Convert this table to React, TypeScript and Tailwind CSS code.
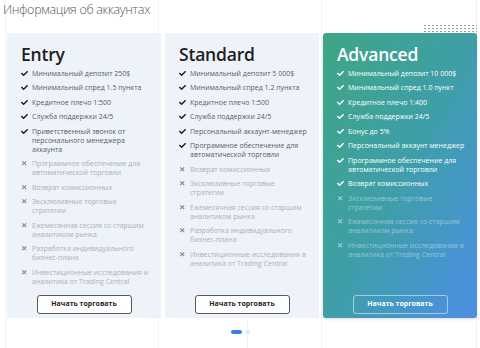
import React from "react";
import { FaCheck, FaTimes } from "react-icons/fa";

type Item = { t: string[]; ok: boolean };

const entry: Item[] = [
  { t: ["Минимальный депозит 250$"], ok: true },
  { t: ["Минимальный спред 1.5 пункта"], ok: true },
  { t: ["Кредитное плечо 1:500"], ok: true },
  { t: ["Служба поддержки 24/5"], ok: true },
  { t: ["Приветственный звонок от", "персонального менеджера", "аккаунта"], ok: true },
  { t: ["Программное обеспечение для", "автоматической торговли"], ok: false },
  { t: ["Возврат комиссионных"], ok: false },
  { t: ["Эксклюзивные торговые", "стратегии"], ok: false },
  { t: ["Ежемесячная сессия со старшим", "аналитиком рынка"], ok: false },
  { t: ["Разработка индивидуального", "бизнес-плана"], ok: false },
  { t: ["Инвестиционные исследования и", "аналитика от Trading Central"], ok: false },
];

const standard: Item[] = [
  { t: ["Минимальный депозит 5 000$"], ok: true },
  { t: ["Минимальный спред 1.2 пункта"], ok: true },
  { t: ["Кредитное плечо 1:500"], ok: true },
  { t: ["Служба поддержки 24/5"], ok: true },
  { t: ["Персональный аккаунт-менеджер"], ok: true },
  { t: ["Программное обеспечение для", "автоматической торговли"], ok: true },
  { t: ["Возврат комиссионных"], ok: false },
  { t: ["Эксклюзивные торговые", "стратегии"], ok: false },
  { t: ["Ежемесячная сессия со старшим", "аналитиком рынка"], ok: false },
  { t: ["Разработка индивидуального", "бизнес-плана"], ok: false },
  { t: ["Инвестиционные исследования в", "аналитика от Trading Central"], ok: false },
];

const advanced: Item[] = [
  { t: ["Минимальный депозит 10 000$"], ok: true },
  { t: ["Минимальный спред 1.0 пункт"], ok: true },
  { t: ["Кредитное плечо 1:400"], ok: true },
  { t: ["Служба поддержки 24/5"], ok: true },
  { t: ["Бонус до 5%"], ok: true },
  { t: ["Персональный аккаунт менеджер"], ok: true },
  { t: ["Программное обеспечение для", "автоматической торговли"], ok: true },
  { t: ["Возврат комиссионных"], ok: true },
  { t: ["Эксклюзивные торговые", "стратегии"], ok: false },
  { t: ["Ежемесячная сессия со старшим", "аналитиком рынка"], ok: false },
  { t: ["Инвестиционные исследования в", "аналитика от Trading Central"], ok: false },
];

function Card({ title, items, dark }: { title: string; items: Item[]; dark?: boolean }) {
  return (
    <div
      className={
        "w-[154px] h-[285px] flex flex-col pt-[11px] pb-[4px] px-[14px] " +
        (dark
          ? "bg-gradient-to-br from-[#3ea683] via-[#3f9ea8] to-[#4d8ee6] rounded-[3px] shadow-[0_1px_3px_rgba(0,0,0,0.15)]"
          : "bg-[#eef3fa]")
      }
    >
      <div
        className={
          "text-[17.5px] leading-[20px] font-semibold tracking-[-0.2px] " +
          (dark ? "text-white" : "text-[#1e1e1e]")
        }
      >
        {title}
      </div>
      <div className="mt-[4.5px] flex flex-col gap-[5.5px]">
        {items.map((it, i) => (
          <div key={i} className="flex items-start">
            <div className="w-[11px] h-[9px] flex items-center shrink-0">
              {it.ok ? (
                <FaCheck
                  className={dark ? "text-white" : "text-[#1a1a1a]"}
                  style={{ width: 7, height: 7 }}
                />
              ) : (
                <FaTimes
                  className={dark ? "text-white/50" : "text-[#868a90]"}
                  style={{ width: 6.5, height: 6.5 }}
                />
              )}
            </div>
            <div
              className={
                "text-[7px] leading-[9px] whitespace-nowrap " +
                (dark
                  ? it.ok
                    ? "text-white"
                    : "text-white/45"
                  : it.ok
                  ? "text-[#5a5d62]"
                  : "text-[#acb0b6]")
              }
            >
              {it.t.map((l, j) => (
                <div key={j}>{l}</div>
              ))}
            </div>
          </div>
        ))}
      </div>
      <div className="mt-auto flex justify-center">
        <div
          className={
            "w-[95px] h-[19px] rounded-[3px] flex items-center justify-center text-[7px] font-bold " +
            (dark
              ? "border border-white/50 text-white"
              : "border border-[#55585c] bg-white text-[#1e1e1e]")
          }
        >
          Начать торговать
        </div>
      </div>
    </div>
  );
}

export default function App() {
  return (
    <div className="relative w-[480px] h-[348px] bg-white overflow-hidden font-['Open_Sans',sans-serif]">
      <div className="absolute inset-0 pointer-events-none">
        <div className="absolute left-[5px] top-0 bottom-0 w-px bg-[#f2f2f2]" />
        <div className="absolute left-[158px] top-0 bottom-0 w-px bg-[#f2f2f2]" />
        <div className="absolute left-[247px] top-[320px] bottom-0 w-px bg-[#f2f2f2]" />
        <div className="absolute left-[321px] top-0 bottom-0 w-px bg-[#f2f2f2]" />
        <div className="absolute left-[476px] top-0 bottom-0 w-px bg-[#f2f2f2]" />
        <div className="absolute left-[423px] top-[24px] w-[54px] h-[8px] bg-[radial-gradient(circle,#9a9a9a_0.8px,transparent_1px)] bg-[length:4px_3px]" />
      </div>
      <div className="relative px-[3px] pt-[2px] text-[12.5px] leading-[15px] font-light text-[#555] tracking-[-0.3px]">
        Информация об аккаунтах
      </div>
      <div className="relative mt-[16px] flex gap-[4px] px-[7px]">
        <Card title="Entry" items={entry} />
        <Card title="Standard" items={standard} />
        <Card title="Advanced" items={advanced} dark />
      </div>
      <div className="relative mt-[12px] flex justify-center items-center gap-[4px]">
        <div className="w-[11px] h-[4px] rounded-full bg-[#3b7fd9]" />
        <div className="w-[4px] h-[4px] rounded-full bg-[#dfe6f0]" />
      </div>
    </div>
  );
}
